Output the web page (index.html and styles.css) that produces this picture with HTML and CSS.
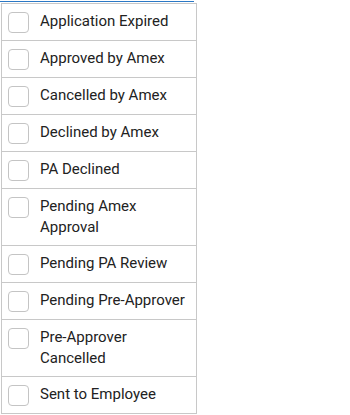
FILE: index.html
```html
<!DOCTYPE html>
<html>
<head>
<meta charset="utf-8">
<link rel="stylesheet" href="styles.css">
</head>
<body>
<div class="topline"></div>
<ul class="options">
  <li class="option"><span class="box"></span><span class="label">Application Expired</span></li>
  <li class="option"><span class="box"></span><span class="label">Approved by Amex</span></li>
  <li class="option"><span class="box"></span><span class="label">Cancelled by Amex</span></li>
  <li class="option"><span class="box"></span><span class="label">Declined by Amex</span></li>
  <li class="option"><span class="box"></span><span class="label">PA Declined</span></li>
  <li class="option"><span class="box"></span><span class="label">Pending Amex Approval</span></li>
  <li class="option"><span class="box"></span><span class="label">Pending PA Review</span></li>
  <li class="option"><span class="box"></span><span class="label">Pending Pre-Approver</span></li>
  <li class="option"><span class="box"></span><span class="label">Pre-Approver Cancelled</span></li>
  <li class="option"><span class="box"></span><span class="label">Sent to Employee</span></li>
</ul>
</body>
</html>
```
FILE: styles.css
```css
html, body {
  margin: 0;
  padding: 0;
  background: #fff;
}
body {
  font-family: Roboto, "Liberation Sans", Arial, sans-serif;
  font-size: 15px;
  color: #222;
}
.topline {
  margin-top: 1px;
  width: 194px;
  height: 1px;
  background: #2b78c5;
}
.options {
  list-style: none;
  margin: 1px 0 0 1px;
  padding: 0;
  width: 196px;
  box-sizing: border-box;
  border: 1px solid #c8c8c8;
}
.option {
  display: flex;
  align-items: flex-start;
  gap: 11px;
  padding: 7px 5px 7px 6px;
  line-height: 21px;
  border-top: 1px solid #c8c8c8;
}
.option:first-child {
  border-top: none;
}
.box {
  flex: none;
  width: 21px;
  height: 21px;
  margin-top: 1px;
  box-sizing: border-box;
  border: 1px solid #c4c4c4;
  border-radius: 4px;
  background: #fff;
}
.label {
  flex: 1;
  min-width: 0;
}
```
